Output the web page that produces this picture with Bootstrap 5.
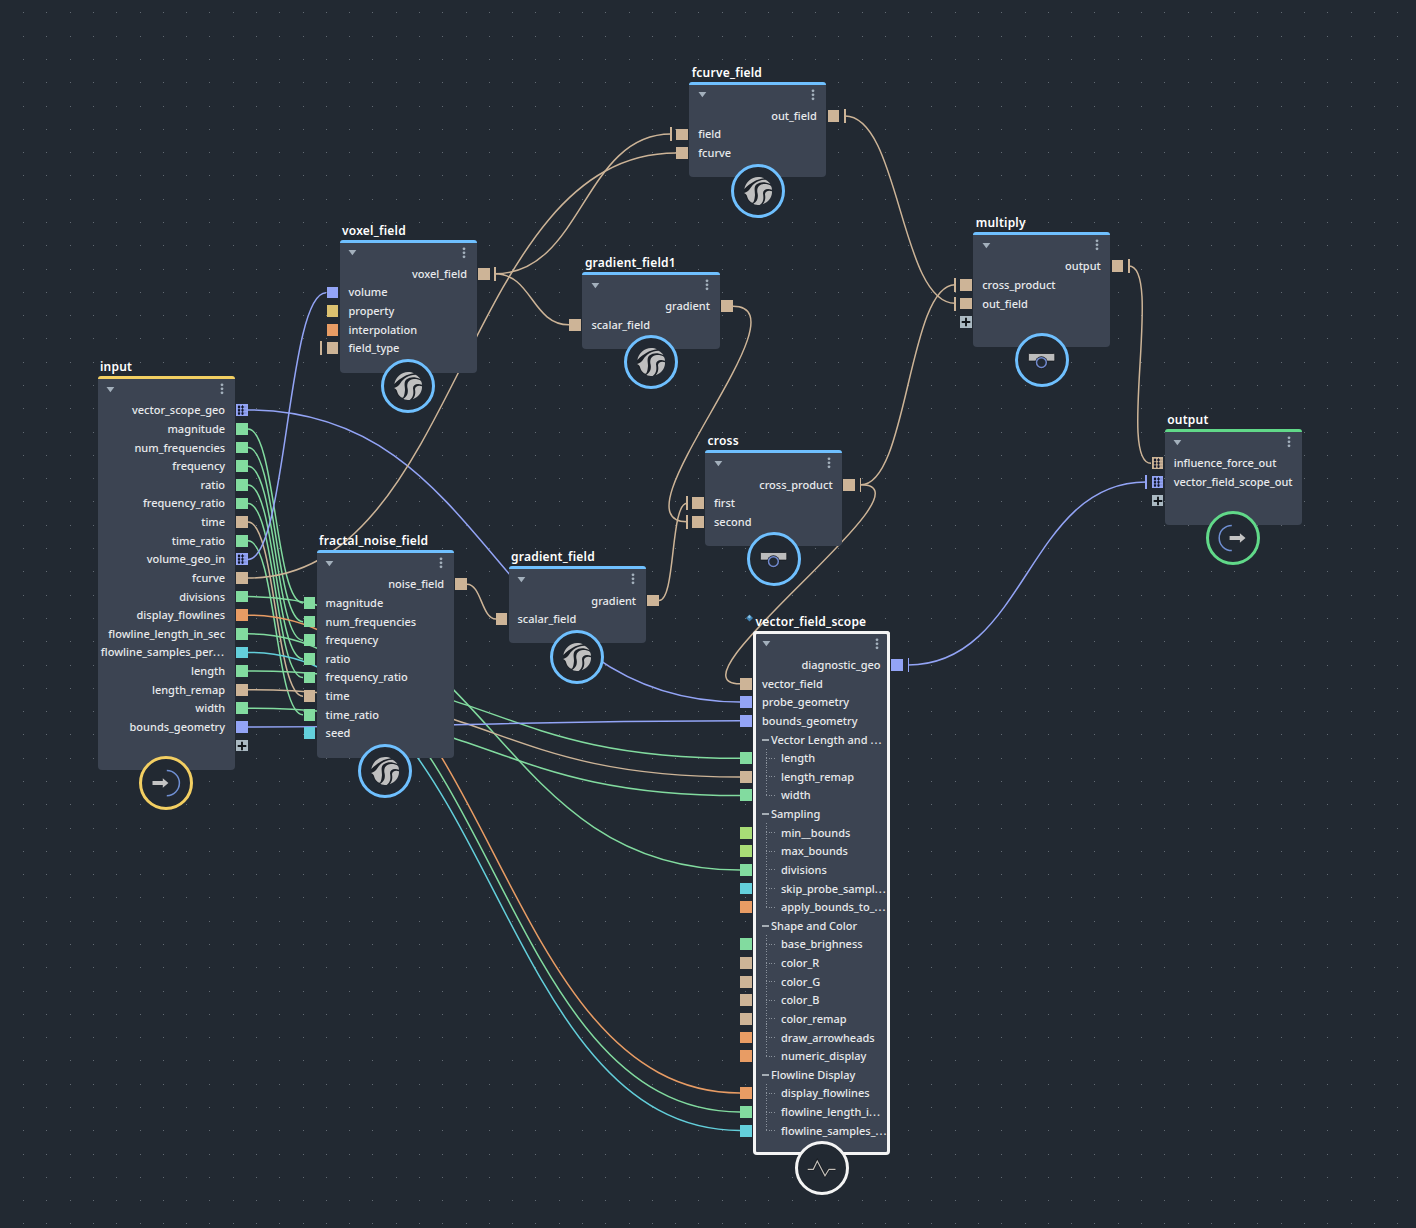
<!DOCTYPE html>
<html lang="en">
<head>
  <meta charset="UTF-8">
  <meta name="viewport" content="width=device-width, initial-scale=1">
  <title>Node Graph</title>
  <link href="https://cdn.jsdelivr.net/npm/bootstrap@5.3.2/dist/css/bootstrap.min.css" rel="stylesheet">
  <style>
    body { background: #222932; color: #e8eaec; font-family: "Noto Sans", "Open Sans", sans-serif; }
    .graph { width: 1416px; height: 1228px; }
    .wires { left: 0; top: 0; }
    .wires path { fill: none; stroke-width: 1.5; }

    .node { width: 137.2px; background: #3c4452; border-radius: 4px; padding-bottom: 15px; }
    .node-top { height: 25px; border-top: 3px solid var(--accent); border-radius: 3px 3px 0 0; padding: 0 11px 2px 8.5px; }
    .node-title { left: 2.5px; top: -17px; font-size: 12px; line-height: 16px; font-weight: 600; letter-spacing: .22px; color: #fff; }
    .node-badge { left: 50%; bottom: -40.2px; width: 54px; height: 54px; margin-left: -27px; border: 3px solid var(--accent); background: #222932; }
    .selected { box-shadow: inset 0 0 0 3px #f4f4f4; }

    .port-row { height: 18.63px; margin: 0 -19.3px; font-size: 11px; font-weight: 500; line-height: 18px; }
    .stub { width: 1.8px; height: 14px; margin-right: 4.5px; }
    .port { width: 11.8px; height: 11.8px; margin-right: 10.2px; }
    .out .stub { margin: 0 0 0 4.5px; }
    .out .port { margin: 0 0 0 10.8px; }
    .port svg { display: block; }
    .ellipsis { letter-spacing: 1px; }
    .dash { width: 7px; height: 2px; margin-right: 2px; background: #a5adb5; }
    .branch { width: 10px; height: 100%; margin: 0 5px 0 4px;
      background: repeating-linear-gradient(#8a929c 0 1px, transparent 1px 2.7px) 0 0 / 1px 100% no-repeat,
                  repeating-linear-gradient(90deg, #8a929c 0 1px, transparent 1px 2.7px) 0 50% / 100% 1px no-repeat; }
    .branch.last { background-size: 1px 50%, 100% 1px; }
  </style>
</head>
<body>

  <svg width="0" height="0" class="position-absolute">
    <defs>
      <symbol id="swirl" viewBox="0 0 84 84">
        <circle cx="42" cy="42" r="41" fill="#1b2027"/>
        <g fill="#bfbfbf">
          <path d="M1 36C5 15 22 0 42 0C50 0 55 1 60 4C38 7 22 16 1 36Z"/>
          <path d="M64 8C71 11 76 16 79 21C60 13 48 15 38 22C28 30 33 43 33 54C32 64 31 70 28 76C24 81 12 69 10 60C8 52 4 50 0 48C9 46 14 42 19 34C28 19 44 8 64 8Z"/>
          <path d="M81 27C83 31 84 34 84 38C68 33 57 38 57 49C59 61 60 76 47 84C40 84 33 83 28 80C41 74 44 60 40 46C38 31 46 22 60 21C69 21 77 23 81 27Z"/>
          <path d="M84 43C85 60 75 75 56 82C66 70 64 60 63 52C63 42 75 39 84 43Z"/>
        </g>
      </symbol>
      <symbol id="compound" viewBox="-21 -21 42 42">
        <rect x="-13.6" y="-6.5" width="26.4" height="7.6" rx="1.2" fill="#bcbcbc" stroke="#171b20" stroke-width=".8"/>
        <circle cx="-.6" cy="2.6" r="6.3" fill="#1b1f24"/>
        <circle cx="-.6" cy="2.6" r="4.9" fill="#222932" stroke="#7088cc" stroke-width="1.5"/>
      </symbol>
      <symbol id="enter" viewBox="-21 -21 42 42">
        <path d="M.8 -12.5A12.6 12.6 0 0 1 .8 12.7" fill="none" stroke="#7090d4" stroke-width="1.5"/>
        <path d="M-13.5 -1.9H-3.2V-4.8L2.4 0L-3.2 4.8V1.9H-13.5Z" fill="#c4c4c4"/>
      </symbol>
      <symbol id="leave" viewBox="-21 -21 42 42">
        <path d="M-1.2 -12.6A12.6 12.6 0 0 0 -1.2 12.6" fill="none" stroke="#7090d4" stroke-width="1.5"/>
        <path d="M-3.4 -1.9H6.9V-4.8L12.5 0L6.9 4.8V1.9H-3.4Z" fill="#c4c4c4"/>
      </symbol>
      <symbol id="pulse" viewBox="-21 -21 42 42">
        <path d="M-14.3 1.3H-8.7L-4.7 -7L3 7.7L7 1.3H13.5" fill="none" stroke="#171b20" stroke-width="2.6"/>
        <path d="M-14.3 1.3H-8.7L-4.7 -7L3 7.7L7 1.3H13.5" fill="none" stroke="#c4c0ba" stroke-width="1.2"/>
      </symbol>
    </defs>
  </svg>

  <main class="graph position-relative overflow-hidden" id="graph">
    <svg class="wires position-absolute" id="wires" width="1416" height="1228"></svg>
  </main>

  <script src="https://cdn.jsdelivr.net/npm/bootstrap@5.3.2/dist/js/bootstrap.bundle.min.js"></script>
  <script>
    const colors = {
      tan: '#cdb497', green: '#82db9f', blue: '#93a4f6', orange: '#e89c64',
      yellow: '#dcc16f', cyan: '#63cfdb', lime: '#a8dc76', plus: '#aab9c2'
    };
    const BLUE = '#6fc0ff';

    // row: [side, label, color, flags]  flags: s = stub, a = array port, g = group, c = child, l = last child
    const nodes = [
      { title: 'input', x: 97.5, y: 376, accent: '#f3cf62', icon: 'enter', rows: [
        ['out', 'vector_scope_geo', 'blue', 'a'], ['out', 'magnitude', 'green'], ['out', 'num_frequencies', 'green'],
        ['out', 'frequency', 'green'], ['out', 'ratio', 'green'], ['out', 'frequency_ratio', 'green'],
        ['out', 'time', 'tan'], ['out', 'time_ratio', 'green'], ['out', 'volume_geo_in', 'blue', 'a'],
        ['out', 'fcurve', 'tan'], ['out', 'divisions', 'green'], ['out', 'display_flowlines', 'orange'],
        ['out', 'flowline_length_in_sec', 'green'], ['out', 'flowline_samples_per...', 'cyan'], ['out', 'length', 'green'],
        ['out', 'length_remap', 'tan'], ['out', 'width', 'green'], ['out', 'bounds_geometry', 'blue'], ['out', '', 'plus']] },
      { title: 'voxel_field', x: 339.5, y: 239.5, accent: BLUE, icon: 'swirl', rows: [
        ['out', 'voxel_field', 'tan', 's'], ['in', 'volume', 'blue'], ['in', 'property', 'yellow'],
        ['in', 'interpolation', 'orange'], ['in', 'field_type', 'tan', 's']] },
      { title: 'fcurve_field', x: 689.2, y: 81.5, accent: BLUE, icon: 'swirl', rows: [
        ['out', 'out_field', 'tan', 's'], ['in', 'field', 'tan', 's'], ['in', 'fcurve', 'tan']] },
      { title: 'gradient_field1', x: 582.4, y: 272, accent: BLUE, icon: 'swirl', rows: [
        ['out', 'gradient', 'tan'], ['in', 'scalar_field', 'tan']] },
      { title: 'fractal_noise_field', x: 316.6, y: 550, accent: BLUE, icon: 'swirl', rows: [
        ['out', 'noise_field', 'tan'], ['in', 'magnitude', 'green'], ['in', 'num_frequencies', 'green'],
        ['in', 'frequency', 'green'], ['in', 'ratio', 'green'], ['in', 'frequency_ratio', 'green'],
        ['in', 'time', 'tan'], ['in', 'time_ratio', 'green'], ['in', 'seed', 'cyan']] },
      { title: 'gradient_field', x: 508.5, y: 566.2, accent: BLUE, icon: 'swirl', rows: [
        ['out', 'gradient', 'tan'], ['in', 'scalar_field', 'tan']] },
      { title: 'cross', x: 705, y: 450.3, accent: BLUE, icon: 'compound', rows: [
        ['out', 'cross_product', 'tan', 's'], ['in', 'first', 'tan', 's'], ['in', 'second', 'tan', 's']] },
      { title: 'multiply', x: 973.2, y: 232, accent: BLUE, icon: 'compound', rows: [
        ['out', 'output', 'tan', 's'], ['in', 'cross_product', 'tan', 's'], ['in', 'out_field', 'tan', 's'], ['in', '', 'plus']] },
      { title: 'output', x: 1164.7, y: 429, accent: '#61d989', icon: 'leave', rows: [
        ['in', 'influence_force_out', 'tan', 'a'], ['in', 'vector_field_scope_out', 'blue', 'as'], ['in', '', 'plus']] },
      { title: 'vector_field_scope', x: 753, y: 630.7, accent: '#f4f4f4', icon: 'pulse', selected: true, rows: [
        ['out', 'diagnostic_geo', 'blue', 's'], ['in', 'vector_field', 'tan'], ['in', 'probe_geometry', 'blue'],
        ['in', 'bounds_geometry', 'blue'], ['in', 'Vector Length and ...', '', 'g'], ['in', 'length', 'green', 'c'],
        ['in', 'length_remap', 'tan', 'c'], ['in', 'width', 'green', 'cl'], ['in', 'Sampling', '', 'g'],
        ['in', 'min__bounds', 'lime', 'c'], ['in', 'max_bounds', 'lime', 'c'], ['in', 'divisions', 'green', 'c'],
        ['in', 'skip_probe_sampl...', 'cyan', 'c'], ['in', 'apply_bounds_to_...', 'orange', 'cl'],
        ['in', 'Shape and Color', '', 'g'], ['in', 'base_brighness', 'green', 'c'], ['in', 'color_R', 'tan', 'c'],
        ['in', 'color_G', 'tan', 'c'], ['in', 'color_B', 'tan', 'c'], ['in', 'color_remap', 'tan', 'c'],
        ['in', 'draw_arrowheads', 'orange', 'c'], ['in', 'numeric_display', 'orange', 'cl'],
        ['in', 'Flowline Display', '', 'g'], ['in', 'display_flowlines', 'orange', 'c'],
        ['in', 'flowline_length_i...', 'green', 'c'], ['in', 'flowline_samples_...', 'cyan', 'cl']] }
    ];

    // wire: [x1, y1, x2, y2, color, handle length (default is half the horizontal distance)]
    const wires = [
      [248, 410, 740, 702, 'blue'], [248, 429, 303, 603, 'green'], [248, 447.6, 303, 621.7, 'green'],
      [248, 466.2, 303, 640.3, 'green'], [248, 484.9, 303, 659, 'green'], [248, 503.5, 303, 677.6, 'green'],
      [248, 522, 303, 696.2, 'tan'], [248, 540.8, 303, 714.8, 'green'], [248, 559.4, 326, 292.8, 'blue'],
      [248, 578, 676, 153, 'tan'], [248, 596.6, 740, 870, 'green'], [248, 615.2, 740, 1093, 'orange'],
      [248, 633.8, 740, 1112, 'green'], [248, 652.4, 740, 1130.5, 'cyan'], [248, 671, 740, 758.3, 'green'],
      [248, 689.7, 740, 777, 'tan'], [248, 708.3, 740, 795.6, 'green'], [248, 727, 740, 720.8, 'blue'],
      [495, 273.8, 671, 134, 'tan'], [495, 273.8, 569, 324.8, 'tan'], [845, 116, 955, 303.3, 'tan'],
      [861, 484.8, 955, 284.7, 'tan'], [861, 484.8, 740, 683.8, 'tan', 79], [733, 306.2, 687, 521.8, 'tan', 77],
      [659, 600.6, 687, 503.2, 'tan', 17], [467, 584.2, 496, 619, 'tan'], [1129, 266, 1151, 463.3, 'tan', 34],
      [908, 665, 1146, 482, 'blue']
    ];

    function portIcon(color, flags) {
      if (color === 'plus') return '<svg width="12" height="12"><path d="M6 1.7v8.6M1.7 6h8.6" stroke="#11151a" stroke-width="1.9"/></svg>';
      if (!flags.includes('a')) return '';
      return '<svg width="12" height="12"><path d="M1.5 3h9M1.5 6h9M1.5 9h9" stroke="#10152a" stroke-opacity=".35" stroke-width=".6"/>' +
        '<path d="M3 1v10M6.5 1v10" stroke="#10152a" stroke-width=".7"/>' +
        '<path d="M3 2v8.5M6.5 2v8.5" stroke="#10152a" stroke-width="2.1" stroke-dasharray="2.1 1.1"/></svg>';
    }

    function rowHtml([side, label, color, flags = '']) {
      const c = colors[color] || 'transparent';
      return `
        <div class="port-row d-flex align-items-center text-nowrap ${side === 'out' ? 'out flex-row-reverse' : ''}">
          <span class="stub flex-shrink-0" style="background:${flags.includes('s') ? c : 'transparent'}"></span>
          <span class="port flex-shrink-0" style="background:${c}">${portIcon(color, flags)}</span>
          ${flags.includes('g') ? '<span class="dash"></span>' : ''}
          ${flags.includes('c') ? `<span class="branch flex-shrink-0 ${flags.includes('l') ? 'last' : ''}"></span>` : ''}
          <span class="port-label">${label.replace('...', '<span class="ellipsis">...</span>')}</span>
        </div>`;
    }

    const graph = document.getElementById('graph');
    nodes.forEach(n => {
      const size = n.icon === 'swirl' ? 28 : 42;
      graph.insertAdjacentHTML('beforeend', `
        <section class="node position-absolute ${n.selected ? 'selected' : ''}" style="left:${n.x}px;top:${n.y}px;--accent:${n.accent}">
          <div class="node-title position-absolute text-nowrap">${n.title}</div>
          <div class="node-top d-flex justify-content-between align-items-center">
            <svg width="9" height="7"><path d="M.5 1h7.8L4.4 6.3z" fill="#a3b0bc"/></svg>
            <svg width="4" height="12"><g fill="#a3b0bc"><circle cx="2" cy="1.8" r="1.4"/><circle cx="2" cy="5.8" r="1.4"/><circle cx="2" cy="9.8" r="1.4"/></g></svg>
          </div>
          ${n.rows.map(rowHtml).join('')}
          <div class="node-badge position-absolute rounded-circle d-flex align-items-center justify-content-center">
            <svg class="flex-shrink-0" width="${size}" height="${size}"><use href="#${n.icon}"/></svg>
          </div>
        </section>`);
    });

    // background dots, snapped to whole pixels
    let dots = '';
    for (let j = 0; j < 53; j++)
      for (let i = 1; i < 61; i++)
        dots += `M${Math.round(i * 23.29 - .2)} ${Math.round(j * 23.29 + 12.4)}h1v1h-1z`;

    document.getElementById('wires').innerHTML = `<path d="${dots}" style="fill:#626a73"/>` + wires.map(([x1, y1, x2, y2, c, h]) => {
      h = h || (x2 - x1) / 2;
      return `<path d="M${x1} ${y1}C${x1 + h} ${y1} ${x2 - h} ${y2} ${x2} ${y2}" stroke="${colors[c]}"/>`;
    }).join('') +
      '<path d="M749.5 614.5l3.5 3.5-3.5 3.5-3.5-3.5z" style="fill:#3f83b4"/><path d="M749.5 615l1.5 2-1.5 1.5-2-1.5z" style="fill:#8cc4e6"/>';
  </script>
</body>
</html>
